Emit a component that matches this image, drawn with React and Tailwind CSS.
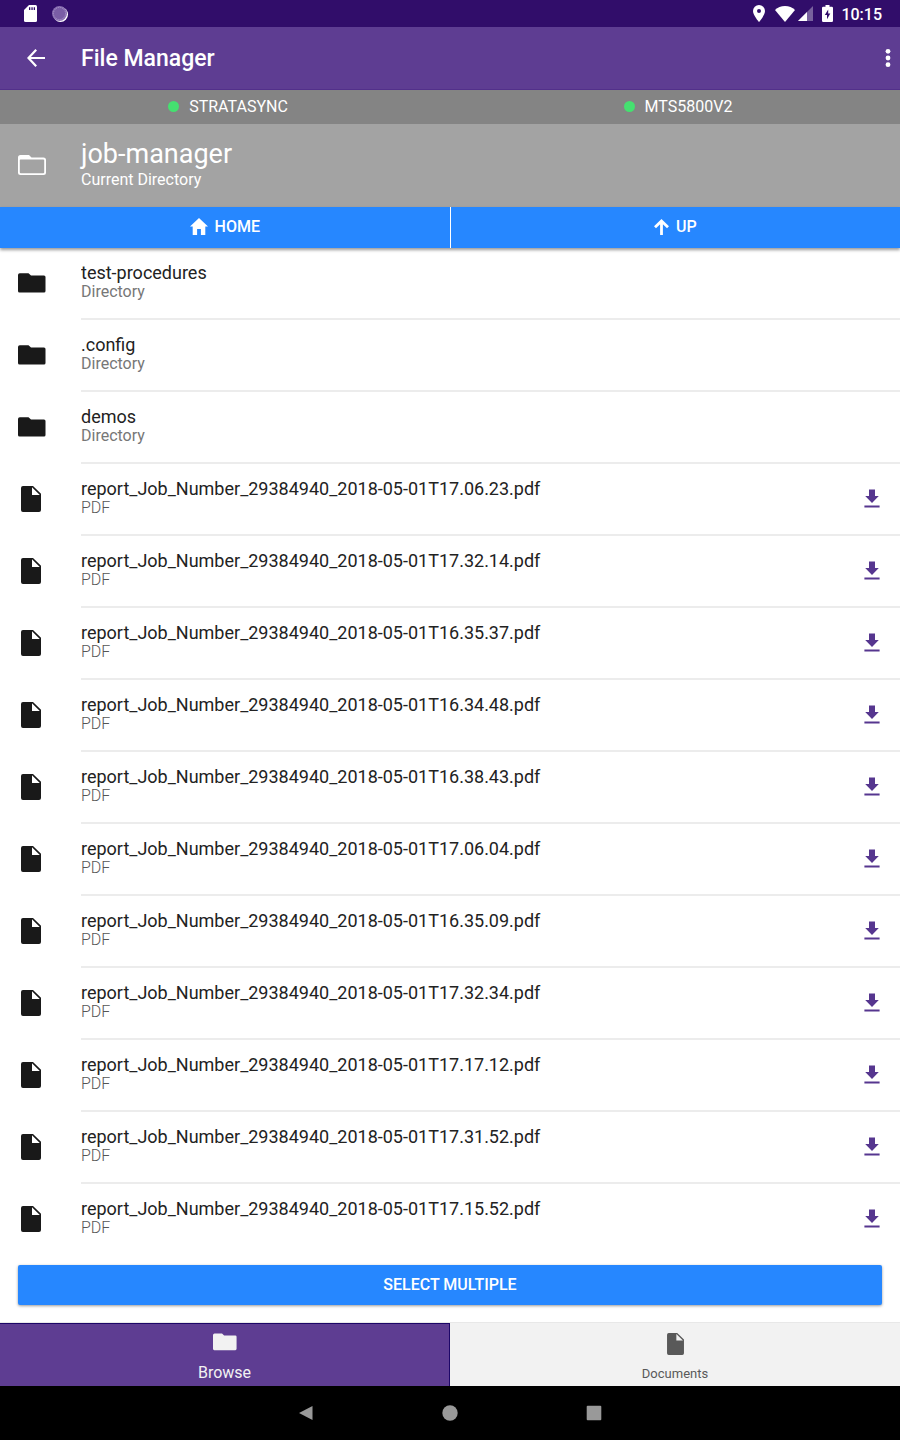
import React from 'react';

const directories = ['test-procedures', '.config', 'demos'];

const reports = [
  'report_Job_Number_29384940_2018-05-01T17.06.23.pdf',
  'report_Job_Number_29384940_2018-05-01T17.32.14.pdf',
  'report_Job_Number_29384940_2018-05-01T16.35.37.pdf',
  'report_Job_Number_29384940_2018-05-01T16.34.48.pdf',
  'report_Job_Number_29384940_2018-05-01T16.38.43.pdf',
  'report_Job_Number_29384940_2018-05-01T17.06.04.pdf',
  'report_Job_Number_29384940_2018-05-01T16.35.09.pdf',
  'report_Job_Number_29384940_2018-05-01T17.32.34.pdf',
  'report_Job_Number_29384940_2018-05-01T17.17.12.pdf',
  'report_Job_Number_29384940_2018-05-01T17.31.52.pdf',
  'report_Job_Number_29384940_2018-05-01T17.15.52.pdf',
];

const items = [
  ...directories.map((name) => ({ name, kind: 'Directory' })),
  ...reports.map((name) => ({ name, kind: 'PDF' })),
];

function FolderIcon({ className }) {
  return (
    <svg viewBox="0 0 28 20" className={className} fill="currentColor" aria-hidden="true">
      <path d="M1.800 0.200H10.500L13 2.500H26A1.500 1.500 0 0 1 27.500 4V18A1.500 1.500 0 0 1 26 19.500H1.500A1.500 1.500 0 0 1 0 18V2A1.800 1.800 0 0 1 1.800 0.200Z" />
    </svg>
  );
}

function FolderOutlineIcon({ className }) {
  return (
    <svg viewBox="0 0 28 20" className={className} fill="currentColor" aria-hidden="true">
      <path
        fillRule="evenodd"
        d="M2.500 0H11L13.500 2.500H25.500A2.500 2.500 0 0 1 28 5V17.500A2.500 2.500 0 0 1 25.500 20H2.500A2.500 2.500 0 0 1 0 17.500V2.500A2.500 2.500 0 0 1 2.500 0ZM1.800 5V17.200Q1.800 18.200 2.800 18.200H25.200Q26.200 18.200 26.200 17.200V5.300Q26.200 4.500 25.200 4.500H2.500Q1.800 4.500 1.800 5Z"
      />
    </svg>
  );
}

function FileIcon({ className }) {
  return (
    <svg viewBox="0 0 20 26" className={className} fill="currentColor" aria-hidden="true">
      <path
        fillRule="evenodd"
        d="M2 0H12L20 7.800V24A2 2 0 0 1 18 26H2A2 2 0 0 1 0 24V2A2 2 0 0 1 2 0ZM11 1.300V9H18.800Z"
      />
    </svg>
  );
}

function DownloadIcon() {
  return (
    <svg viewBox="0 0 16 20" className="h-5 w-4" fill="currentColor" aria-hidden="true">
      <path d="M5 0.500H11V7H14.800L8 14L1.200 7H5ZM0.400 16.500H15.600V18.500H0.400Z" />
    </svg>
  );
}

function SystemBar() {
  return (
    <div className="flex h-[27px] items-center justify-between bg-[#310d6a] pr-[18px] pl-6 text-white">
      <div className="flex items-center gap-[15px]">
        <svg viewBox="0 0 13 17" className="h-[17px] w-[13px]" aria-hidden="true">
          <path fill="#fff" d="M5 0H11.500Q13 0 13 1.500V15.500Q13 17 11.500 17H1.500Q0 17 0 15.500V5Z" />
          <path fill="#310d6a" d="M5 2.200H6.300V5H5ZM7.400 2.200H8.700V5H7.400ZM9.700 2.200H11V5H9.700Z" />
        </svg>
        <svg viewBox="0 0 16 16" className="size-4" aria-hidden="true">
          <circle cx="8.500" cy="8.500" r="7.500" fill="#fff" />
          <circle cx="7.500" cy="7.500" r="7.500" fill="#8a6fb3" />
          <circle cx="7.500" cy="7.500" r="6" fill="#7a5da6" stroke="#a995c8" strokeWidth="1" strokeDasharray="1 1" />
        </svg>
      </div>
      <div className="flex items-center">
        <svg viewBox="0 0 12 17" className="mr-[10px] h-[17px] w-3" fill="#fff" aria-hidden="true">
          <path fillRule="evenodd" d="M6 0A6 6 0 0 0 0 6C0 10.200 6 17 6 17S12 10.200 12 6A6 6 0 0 0 6 0ZM6 4A2 2 0 1 1 6 8A2 2 0 0 1 6 4Z" />
        </svg>
        <svg viewBox="0 0 20 16" className="mr-[3px] h-4 w-5" fill="#fff" aria-hidden="true">
          <path d="M10 16L0 4Q4 0 10 0T20 4Z" />
        </svg>
        <svg viewBox="0 0 15 15" className="mr-[9px] size-[15px]" fill="#fff" aria-hidden="true">
          <path fillOpacity="0.350" d="M15 0V15H0Z" />
          <path d="M9 6V15H0Z" />
        </svg>
        <svg viewBox="0 0 11 17" className="mr-2 h-[17px] w-[11px]" fill="#fff" aria-hidden="true">
          <path fillRule="evenodd" d="M3.500 0H7.500V1.700H9.800Q11 1.700 11 2.900V15.800Q11 17 9.800 17H1.200Q0 17 0 15.800V2.900Q0 1.700 1.200 1.700H3.500ZM6.200 4.500L2.800 10H5V14.200L8.300 8.600H6.200Z" />
        </svg>
        <span className="pt-0.5 text-base leading-5 font-medium">10:15</span>
      </div>
    </div>
  );
}

function Connection({ name }) {
  return (
    <div className="flex flex-1 items-center justify-center gap-[10px] pl-1.5">
      <span className="size-[11px] rounded-full bg-[#45e070]" />
      <span className="pt-0.5">{name}</span>
    </div>
  );
}

function Row({ item, last }) {
  const isFile = item.kind === 'PDF';
  return (
    <li className="flex h-[72px]">
      <div className="flex w-[81px] shrink-0 items-center pb-[3px] pl-[18px] text-[#191919]">
        {isFile ? <FileIcon className="ml-[3px] h-[26px] w-5" /> : <FolderIcon className="h-5 w-7" />}
      </div>
      <div className={last ? 'flex min-w-0 flex-1' : 'flex min-w-0 flex-1 border-b-2 border-[#ececec]'}>
        <div className="min-w-0 flex-1 pt-[15px]">
          <h2 className="truncate text-lg leading-5 text-[#222]">{item.name}</h2>
          <p className={isFile ? 'text-base leading-[18px] font-light text-[#555]' : 'text-base leading-[18px] text-[#777]'}>{item.kind}</p>
        </div>
        {isFile && (
          <button type="button" aria-label={'Download ' + item.name} className={last ? 'flex w-14 items-center justify-center pb-[3px] text-[#56368f]' : 'flex w-14 items-center justify-center pb-px text-[#56368f]'}>
            <DownloadIcon />
          </button>
        )}
      </div>
    </li>
  );
}

export default function App() {
  return (
    <div className="flex min-h-screen flex-col bg-white font-['Roboto',sans-serif]">
      <SystemBar />
      <header className="flex h-[63px] items-center border-b border-[#52308a] bg-[#5e3d92] text-white">
        <button type="button" aria-label="Back" className="flex w-[81px] pl-[27px]">
          <svg viewBox="0 0 18 18" className="size-[18px]" fill="none" stroke="currentColor" strokeWidth="2.200" aria-hidden="true">
            <path d="M18 9H1.500M9.200 0.800L1.500 9L9.200 17.200" />
          </svg>
        </button>
        <h1 className="flex-1 pt-0.5 text-[23px] leading-7 font-medium">File Manager</h1>
        <button type="button" aria-label="More options" className="pr-[9px]">
          <svg viewBox="0 0 6 20" className="h-5 w-1.5" fill="currentColor" aria-hidden="true">
            <circle cx="3" cy="3.300" r="2.400" />
            <circle cx="3" cy="10" r="2.400" />
            <circle cx="3" cy="16.700" r="2.400" />
          </svg>
        </button>
      </header>

      <div className="flex h-[34px] bg-[#848484] pb-0.5 text-base leading-5 text-white">
        <Connection name="STRATASYNC" />
        <Connection name="MTS5800V2" />
      </div>

      <section className="flex h-[83px] items-center bg-[#a3a3a3] pb-0.5 text-white">
        <div className="w-[81px] pl-[18px]">
          <FolderOutlineIcon className="h-5 w-7" />
        </div>
        <div className="pb-0.5">
          <h2 className="text-[27px] leading-8">job-manager</h2>
          <p className="text-base leading-5">Current Directory</p>
        </div>
      </section>

      <div className="flex h-[41px] bg-white text-base leading-5 font-medium text-white shadow-[0_2px_3px_rgba(0,0,0,0.4)]">
        <button type="button" className="flex flex-1 items-center justify-center gap-[7px] border-r border-white bg-[#2687ff] pb-0.5">
          <svg viewBox="0 0 18 17" className="h-[17px] w-[18px]" fill="currentColor" aria-hidden="true">
            <path d="M9 0L18 8.500H15.300V17H10.900V11H7.100V17H2.700V8.500H0Z" />
          </svg>
          HOME
        </button>
        <button type="button" className="flex flex-1 items-center justify-center gap-[7px] bg-[#2687ff] pb-0.5">
          <svg viewBox="0 0 15 16" className="h-4 w-[15px]" fill="none" stroke="currentColor" strokeWidth="2.800" aria-hidden="true">
            <path d="M7.500 16V2.500M1 8.300L7.500 2L14 8.300" />
          </svg>
          UP
        </button>
      </div>

      <main className="flex-1">
        <ul>
          {items.map((item, i) => (
            <Row key={item.name} item={item} last={i === items.length - 1} />
          ))}
        </ul>
        <div className="px-[18px] pt-[9px] pb-[17px]">
          <button type="button" className="h-10 w-full rounded-xs bg-[#2687ff] pb-px text-base leading-5 font-medium text-white shadow-[0_1px_3px_rgba(0,0,0,0.4)]">
            SELECT MULTIPLE
          </button>
        </div>
      </main>

      <nav className="grid h-16 grid-cols-2 border-t border-[#e8e8e8] bg-[#f2f2f2]">
        <a href="#browse" className="flex flex-col items-center border-t border-r border-[#1d0768] bg-[#5e3d92] pt-[9px] text-[#f2f2f2]">
          <FolderIcon className="h-[18px] w-6" />
          <span className="mt-3 text-base leading-5">Browse</span>
        </a>
        <a href="#documents" className="flex flex-col items-center pt-[10px] text-[#595959]">
          <FileIcon className="h-[22px] w-[17px]" />
          <span className="mt-[9px] text-[13px] leading-5">Documents</span>
        </a>
      </nav>

      <div className="flex h-[54px] items-center justify-center gap-32 bg-black text-[#999]">
        <button type="button" aria-label="System back">
          <svg viewBox="0 0 16 16" className="size-4" fill="currentColor" aria-hidden="true">
            <path d="M14.500 1V15L1 8Z" />
          </svg>
        </button>
        <button type="button" aria-label="System home">
          <svg viewBox="0 0 16 16" className="size-4" fill="currentColor" aria-hidden="true">
            <circle cx="8" cy="8" r="7.700" />
          </svg>
        </button>
        <button type="button" aria-label="Recent apps">
          <svg viewBox="0 0 16 16" className="size-4" fill="currentColor" aria-hidden="true">
            <rect x="0.700" y="0.700" width="14.600" height="14.600" rx="1" />
          </svg>
        </button>
      </div>
    </div>
  );
}
